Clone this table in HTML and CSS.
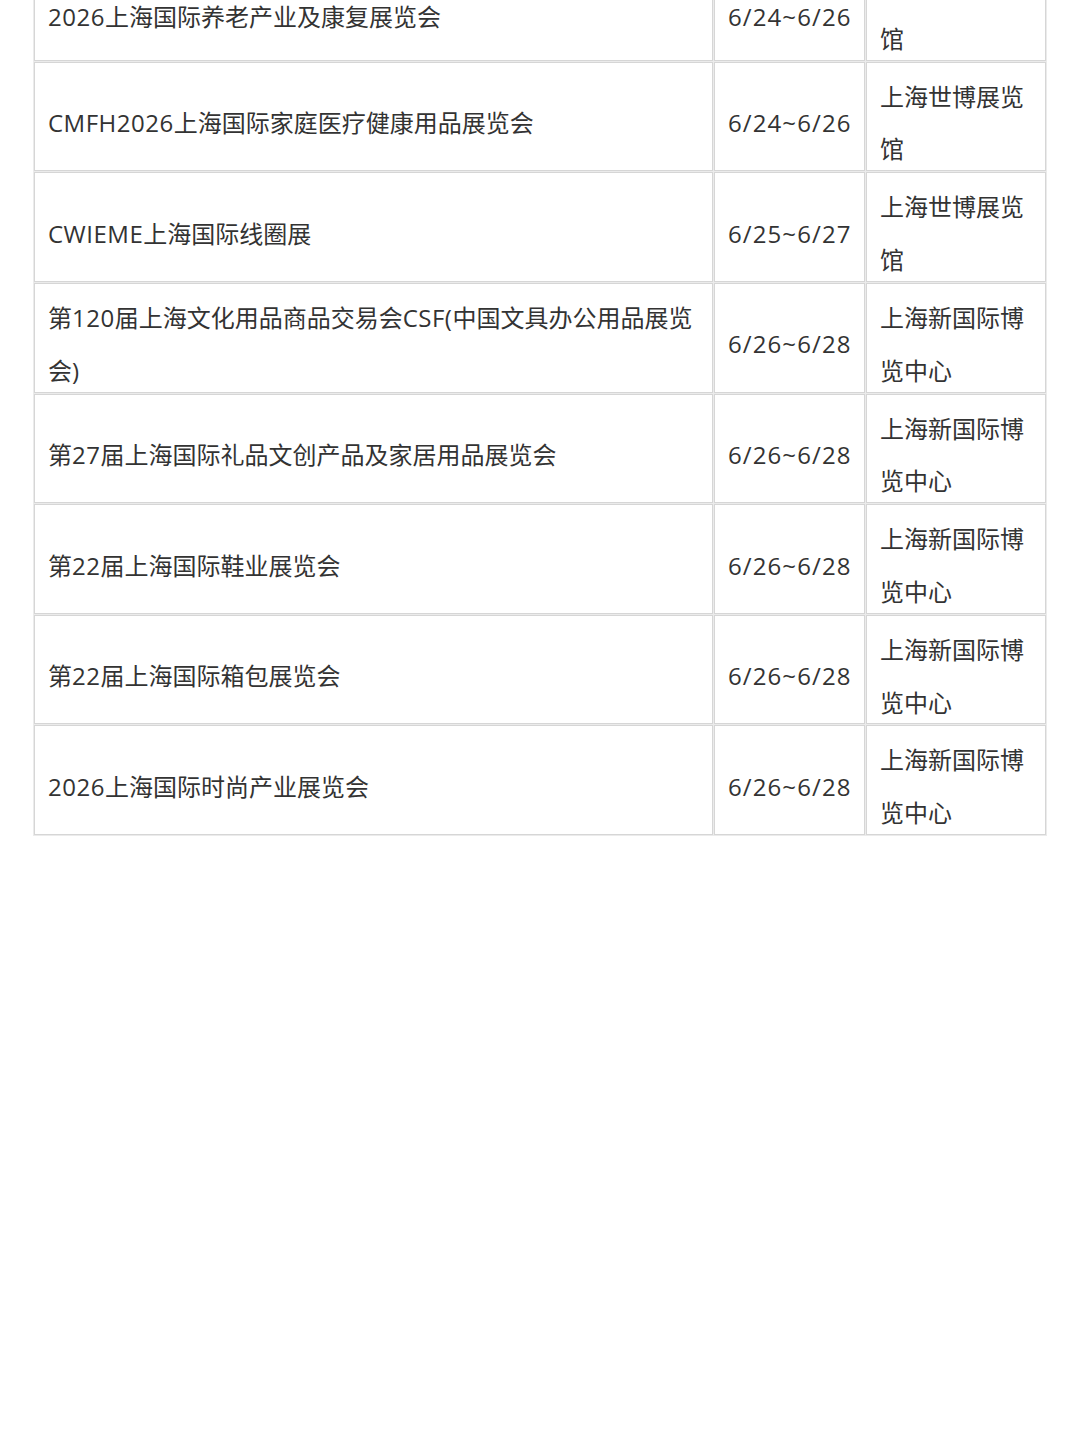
FILE: index.html
```html
<!DOCTYPE html>
<html lang="zh-CN">
<head>
<meta charset="utf-8">
<title>上海展会日程</title>
<link rel="stylesheet" href="styles.css">
</head>
<body>
<div class="page">
  <table class="expo">
    <colgroup>
      <col class="col-name">
      <col class="col-date">
      <col class="col-venue">
    </colgroup>
    <tbody>
      <tr class="first">
        <td class="name"><span class="t"><span class="en">2026</span>上海国际养老产业及康复展览会</span></td>
        <td class="date"><span class="t">6/24~6/26</span></td>
        <td class="venue"><span class="t">上海世博展览馆</span></td>
      </tr>
      <tr>
        <td class="name"><span class="t"><span class="en">CMFH2026</span>上海国际家庭医疗健康用品展览会</span></td>
        <td class="date"><span class="t">6/24~6/26</span></td>
        <td class="venue"><span class="t">上海世博展览馆</span></td>
      </tr>
      <tr>
        <td class="name"><span class="t"><span class="en">CWIEME</span>上海国际线圈展</span></td>
        <td class="date"><span class="t">6/25~6/27</span></td>
        <td class="venue"><span class="t">上海世博展览馆</span></td>
      </tr>
      <tr>
        <td class="name"><span class="t">第<span class="en">120</span>届上海文化用品商品交易会<span class="en">CSF(</span>中国文具办公用品展览会)</span></td>
        <td class="date"><span class="t">6/26~6/28</span></td>
        <td class="venue"><span class="t">上海新国际博览中心</span></td>
      </tr>
      <tr>
        <td class="name"><span class="t">第<span class="en">27</span>届上海国际礼品文创产品及家居用品展览会</span></td>
        <td class="date"><span class="t">6/26~6/28</span></td>
        <td class="venue"><span class="t">上海新国际博览中心</span></td>
      </tr>
      <tr>
        <td class="name"><span class="t">第<span class="en">22</span>届上海国际鞋业展览会</span></td>
        <td class="date"><span class="t">6/26~6/28</span></td>
        <td class="venue"><span class="t">上海新国际博览中心</span></td>
      </tr>
      <tr>
        <td class="name"><span class="t">第<span class="en">22</span>届上海国际箱包展览会</span></td>
        <td class="date"><span class="t">6/26~6/28</span></td>
        <td class="venue"><span class="t">上海新国际博览中心</span></td>
      </tr>
      <tr>
        <td class="name"><span class="t"><span class="en">2026</span>上海国际时尚产业展览会</span></td>
        <td class="date"><span class="t">6/26~6/28</span></td>
        <td class="venue"><span class="t">上海新国际博览中心</span></td>
      </tr>
    </tbody>
  </table>
</div>
</body>
</html>
```

FILE: styles.css
```css
html, body {
  margin: 0;
  padding: 0;
  background: #ffffff;
}

body {
  font-family: "Open Sans", "Noto Sans CJK SC", sans-serif;
  color: #333333;
  min-height: 1440px;
}

.page {
  padding: 0 33px;
  margin-top: -50px;
}

.expo {
  width: 1014px;
  table-layout: fixed;
  border-collapse: separate;
  border-spacing: 1px;
  background: #ebebeb;
}

.col-name { width: 679px; }
.col-date { width: 151px; }
.col-venue { width: 180px; }

.expo td {
  background: #ffffff;
  border: 1px solid #d6d6d6;
  padding: 1px 13px;
  font-size: 24px;
  line-height: 38.82px;
  vertical-align: middle;
  text-align: left;
  word-break: normal;
}

.expo td.date {
  white-space: nowrap;
  letter-spacing: 1.1px;
}

.expo .t {
  vertical-align: -14px;
}

.expo .en {
  letter-spacing: 0.5px;
}

.expo tr.first td.name,
.expo tr.first td.date {
  padding-top: 11px;
}
```
